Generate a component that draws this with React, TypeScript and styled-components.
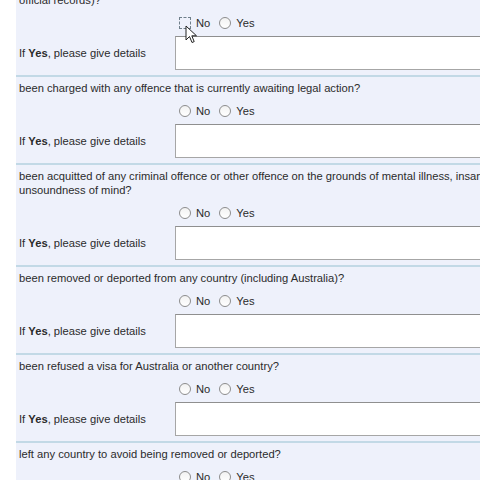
import styled, { createGlobalStyle } from "styled-components";

const GlobalStyle = createGlobalStyle`
  html, body {
    margin: 0;
    padding: 0;
    background: #ffffff;
    overflow: hidden;
  }
  body {
    font-family: "Liberation Sans", Arial, sans-serif;
  }
`;

const Page = styled.div`
  display: flex;
  width: 480px;
  height: 480px;
  overflow: hidden;
  background: #ffffff;
`;

const Gutter = styled.div`
  flex: 0 0 16px;
  background: #ffffff;
`;

const Panel = styled.div`
  flex: 0 0 760px;
  background: #eef1fb;
  color: #2b2b2b;
  font-size: 11.2px;
`;

const Section = styled.div<{ $first?: boolean }>`
  padding: 4px 0 5px 3px;
  margin-top: ${(p) => (p.$first ? "-11px" : "0")};
  border-bottom: 2px solid #c2d9e6;
`;

const Question = styled.div`
  line-height: 14px;
`;

const RadioRow = styled.div`
  position: relative;
  display: flex;
  align-items: center;
  height: 16px;
  margin: 8px 0 0 156px;
`;

const RadioOption = styled.label`
  display: flex;
  align-items: center;
  margin-right: 5px;
`;

const Circle = styled.span<{ $focused?: boolean }>`
  position: relative;
  width: 12px;
  height: 12px;
  box-sizing: border-box;
  border-radius: 50%;
  border: 1px solid #8d8d8d;
  background: linear-gradient(#f2f2f2, #ffffff);
  margin: 0 5px 0 4px;
  ${(p) =>
    p.$focused &&
    `
    border-color: transparent;
    background: transparent;
    &::after {
      content: "";
      position: absolute;
      inset: -1px;
      border: 1px dashed #6f7f8a;
    }
  `}
`;

const Cursor = styled.svg`
  position: absolute;
  left: 10px;
  top: 10px;
`;

const DetailsRow = styled.div`
  display: grid;
  grid-template-columns: 156px 1fr;
  align-items: center;
  margin-top: 5px;
`;

const Label = styled.span`
  line-height: 14px;
  b {
    font-weight: bold;
  }
`;

const DetailsInput = styled.div`
  height: 34px;
  box-sizing: border-box;
  background: #ffffff;
  border: 1px solid #a6a6a6;
  border-top-color: #8f8f8f;
`;

type Q = { lines: string[]; first?: boolean; focused?: boolean };

const questions: Q[] = [
  { lines: ["official records)?"], first: true, focused: true },
  { lines: ["been charged with any offence that is currently awaiting legal action?"] },
  {
    lines: [
      "been acquitted of any criminal offence or other offence on the grounds of mental illness, insanity or",
      "unsoundness of mind?",
    ],
  },
  { lines: ["been removed or deported from any country (including Australia)?"] },
  { lines: ["been refused a visa for Australia or another country?"] },
  { lines: ["left any country to avoid being removed or deported?"] },
];

export default function App() {
  return (
    <>
      <GlobalStyle />
      <Page>
        <Gutter />
        <Panel>
          {questions.map((q, i) => (
            <Section key={i} $first={q.first}>
              <Question>
                {q.lines.map((l, j) => (
                  <div key={j}>{l}</div>
                ))}
              </Question>
              <RadioRow>
                <RadioOption>
                  <Circle $focused={q.focused} />
                  No
                </RadioOption>
                <RadioOption>
                  <Circle />
                  Yes
                </RadioOption>
                {q.focused && (
                  <Cursor width="13" height="19" viewBox="0 0 13 19">
                    <path
                      d="M1 1 L1 15 L4.5 11.5 L7 17.5 L9.2 16.6 L6.8 10.8 L11.5 10.8 Z"
                      fill="#ffffff"
                      stroke="#222"
                      strokeWidth="1"
                      strokeLinejoin="round"
                    />
                  </Cursor>
                )}
              </RadioRow>
              <DetailsRow>
                <Label>
                  If <b>Yes</b>, please give details
                </Label>
                <DetailsInput />
              </DetailsRow>
            </Section>
          ))}
        </Panel>
      </Page>
    </>
  );
}
